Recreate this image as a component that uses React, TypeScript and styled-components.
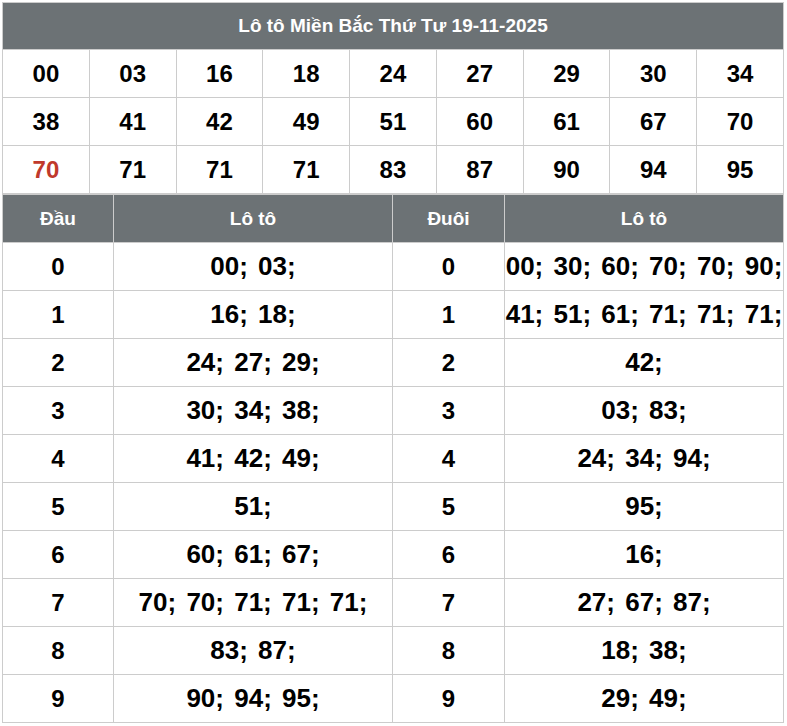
import styled, { createGlobalStyle } from "styled-components";

const GlobalStyle = createGlobalStyle`
  body {
    margin: 0;
    background: #ffffff;
    font-family: "Liberation Sans", Arial, sans-serif;
  }
`;

const Wrapper = styled.div`
  width: 782px;
  padding: 2px 2px 0 2px;
`;

const Table = styled.table`
  width: 100%;
  border-collapse: collapse;
  table-layout: fixed;
  color: #000000;
`;

const TitleCell = styled.th`
  height: 46px;
  padding: 0;
  background: #6c7275;
  color: #ffffff;
  font-size: 19px;
  font-weight: 700;
  text-align: center;
  border: 1px solid #cccccc;
`;

const HeadCell = styled.th<{ $w?: number }>`
  height: 47px;
  padding: 0;
  width: ${(p) => (p.$w ? `${p.$w}px` : "auto")};
  background: #6c7275;
  color: #ffffff;
  font-size: 19px;
  font-weight: 700;
  text-align: center;
  border: 1px solid #cccccc;
`;

const NumCell = styled.td<{ $red?: boolean }>`
  height: 47px;
  padding: 0;
  text-align: center;
  font-size: 24px;
  font-weight: 700;
  color: ${(p) => (p.$red ? "#c0392b" : "#000000")};
  border: 1px solid #cccccc;
`;

const LotoCell = styled.td`
  height: 47px;
  padding: 0;
  text-align: center;
  font-size: 26px;
  font-weight: 700;
  word-spacing: 3px;
  white-space: nowrap;
  overflow: hidden;
  border: 1px solid #cccccc;
`;

const numbers = [
  "00", "03", "16", "18", "24", "27", "29", "30", "34",
  "38", "41", "42", "49", "51", "60", "61", "67", "70",
  "70", "71", "71", "71", "83", "87", "90", "94", "95",
];

const dau = [
  "00; 03;",
  "16; 18;",
  "24; 27; 29;",
  "30; 34; 38;",
  "41; 42; 49;",
  "51;",
  "60; 61; 67;",
  "70; 70; 71; 71; 71;",
  "83; 87;",
  "90; 94; 95;",
];

const duoi = [
  "00; 30; 60; 70; 70; 90;",
  "41; 51; 61; 71; 71; 71;",
  "42;",
  "03; 83;",
  "24; 34; 94;",
  "95;",
  "16;",
  "27; 67; 87;",
  "18; 38;",
  "29; 49;",
];

const rows = [0, 1, 2].map((r) => numbers.slice(r * 9, r * 9 + 9));

const App = () => {
  return (
    <Wrapper>
      <GlobalStyle />
      <Table>
        <thead>
          <tr>
            <TitleCell colSpan={9}>Lô tô Miền Bắc Thứ Tư 19-11-2025</TitleCell>
          </tr>
        </thead>
        <tbody>
          {rows.map((row, r) => (
            <tr key={r}>
              {row.map((n, i) => (
                <NumCell key={i} $red={r === 2 && i === 0}>
                  {n}
                </NumCell>
              ))}
            </tr>
          ))}
        </tbody>
      </Table>
      <Table>
        <thead>
          <tr>
            <HeadCell $w={110}>Đầu</HeadCell>
            <HeadCell>Lô tô</HeadCell>
            <HeadCell $w={111}>Đuôi</HeadCell>
            <HeadCell>Lô tô</HeadCell>
          </tr>
        </thead>
        <tbody>
          {dau.map((d, i) => (
            <tr key={i}>
              <NumCell>{i}</NumCell>
              <LotoCell>{d}</LotoCell>
              <NumCell>{i}</NumCell>
              <LotoCell>{duoi[i]}</LotoCell>
            </tr>
          ))}
        </tbody>
      </Table>
    </Wrapper>
  );
};

export default App;
